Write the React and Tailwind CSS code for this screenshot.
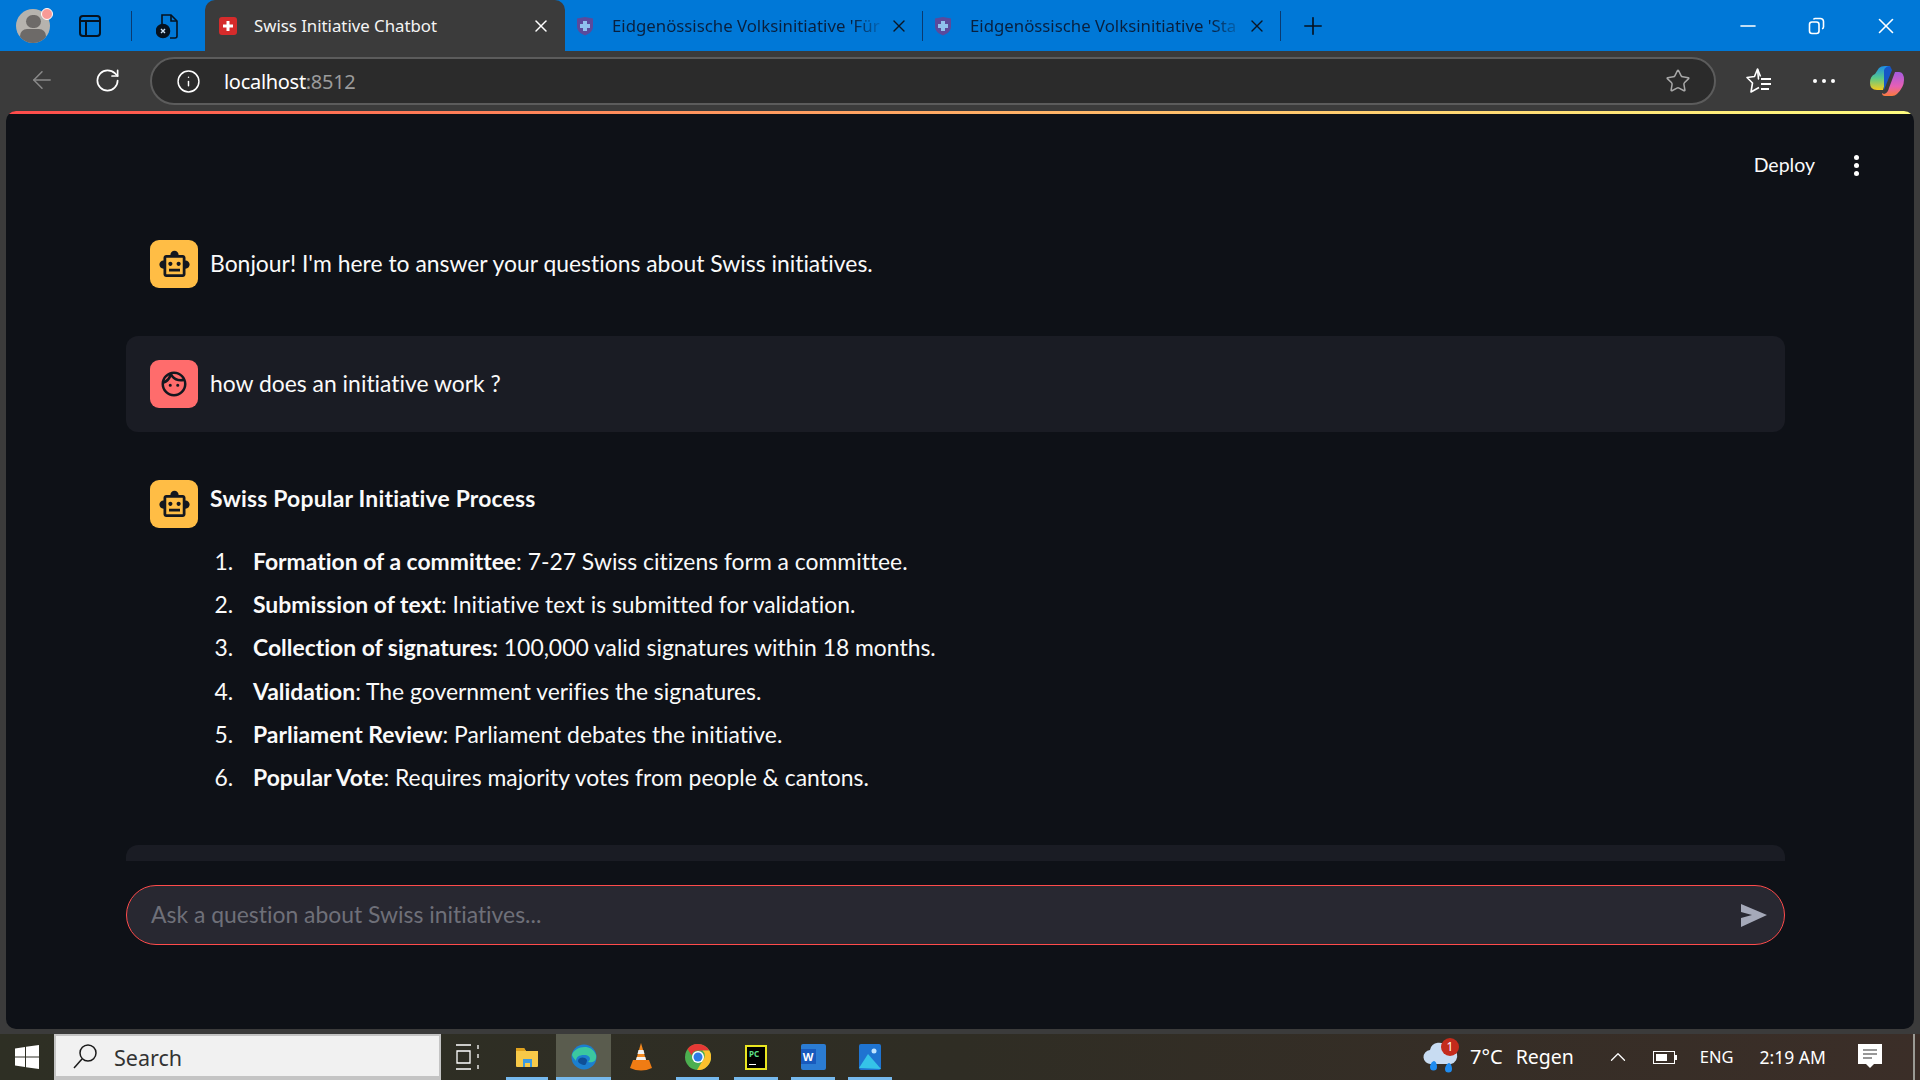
import { MdOutlineSmartToy, MdOutlineFace } from 'react-icons/md';
import { X, Plus, Minus, ArrowLeft, RotateCw, Info, Star, ChevronUp } from 'lucide-react';

const ui = "font-['Noto_Sans',sans-serif]";
const steps = [
  ['Formation of a committee', ': 7-27 Swiss citizens form a committee.'],
  ['Submission of text', ': Initiative text is submitted for validation.'],
  ['Collection of signatures:', ' 100,000 valid signatures within 18 months.'],
  ['Validation', ': The government verifies the signatures.'],
  ['Parliament Review', ': Parliament debates the initiative.'],
  ['Popular Vote', ': Requires majority votes from people & cantons.'],
];

const SwissIcon = () => (
  <svg width="18" height="18" viewBox="0 0 18 18" className="shrink-0">
    <rect width="18" height="18" rx="3" fill="#d52b2b" />
    <path d="M7.5 4h3v3.5H14v3h-3.5V14h-3v-3.5H4v-3h3.5z" fill="#fff" />
  </svg>
);

const ShieldIcon = () => (
  <svg width="18" height="20" viewBox="0 0 18 20" className="shrink-0">
    <path d="M1 2.5 9 1l8 1.5v8C17 15 13 18 9 19.500 5 18 1 15 1 10.500z" fill="#5a4a9c" />
    <path d="M7 5h4v3h3v4h-3v3H7v-3H4V8h3z" fill="#8fc1ee" />
  </svg>
);

const Robot = () => (
  <div className="w-12 h-12 rounded-[9px] bg-[#ffbd45] flex items-center justify-center shrink-0 text-[#14171f]">
    <MdOutlineSmartToy size={33} />
  </div>
);

const Tab = ({ title }) => (
  <div className="w-[357px] h-full flex items-center pl-[11px] shrink-0">
    <ShieldIcon />
    <span className="ml-[18px] w-[268px] whitespace-nowrap overflow-hidden text-[16.800px] bg-gradient-to-r from-[#08203f] from-90% to-[#08203f33] bg-clip-text text-transparent">{title}</span>
    <X size={20} strokeWidth={1.6} className="ml-[9px] text-[#0a1626]" />
  </div>
);

const Sep = () => <div className="w-px h-[30px] bg-[#0a3a70] shrink-0" />;

const Browser = () => (
  <div className={`${ui} shrink-0`}>
    <div className="h-[51px] bg-[#0078d7] flex items-center relative">
      <div className="ml-[16px] w-[34px] h-[34px] rounded-full bg-[#b6b3ae] overflow-hidden relative shrink-0 flex flex-col items-center">
        <div className="w-[15px] h-[15px] rounded-full bg-[#6d6a68] mt-[6px]" />
        <div className="w-[26px] h-[16px] rounded-full bg-[#6d6a68] mt-[1px]" />
      </div>
      <div className="absolute left-[41px] top-[8px] w-[12px] h-[12px] rounded-full bg-[#f79a96] border border-[#fff]" />
      <svg width="22" height="22" viewBox="0 0 22 22" className="ml-[29px] shrink-0" fill="none" stroke="#06121f" strokeWidth="2">
        <rect x="1" y="1" width="20" height="20" rx="3" />
        <path d="M1 6h20M7 6v15" />
      </svg>
      <div className="w-px h-[30px] bg-[#0a3a70] ml-[30px] shrink-0" />
      <svg width="22" height="26" viewBox="0 0 22 26" className="ml-[24px] shrink-0" fill="none" stroke="#06121f" strokeWidth="1.6">
        <path d="M6 12V2h9l6 6v15a2 2 0 0 1-2 2h-5" />
        <path d="M15 2v6h6" />
        <circle cx="7" cy="18" r="6.500" fill="#06121f" />
        <path d="m5 16 4 4m0-4-4 4" stroke="#cfe4f7" strokeWidth="1.400" />
      </svg>
      <div className="ml-[27px] w-[360px] h-full bg-[#3b3b3b] rounded-t-[10px] flex items-center pl-[14px] shrink-0">
        <SwissIcon />
        <span className="ml-[17px] text-[16.800px] text-[#f4f4f4] whitespace-nowrap">Swiss Initiative Chatbot</span>
        <X size={20} strokeWidth={1.8} className="ml-auto mr-[14px] text-white" />
      </div>
      <Tab title="Eidgenössische Volksinitiative 'Für" />
      <Sep />
      <Tab title="Eidgenössische Volksinitiative 'Sta" />
      <Sep />
      <Plus size={28} strokeWidth={1.4} className="ml-[18px] text-[#06121f]" />
      <Minus size={24} strokeWidth={1.6} className="ml-[409px] text-white" />
      <svg width="18" height="18" viewBox="0 0 18 18" className="ml-[48px]" fill="none" stroke="#fff" strokeWidth="1.6">
        <rect x="1.500" y="5" width="9.500" height="11.500" rx="2.500" />
        <path d="M5.500 2.500A1.500 1.500 0 0 1 7 1.500h5.500a3 3 0 0 1 3 3V10a2 2 0 0 1-1.500 1.800" />
      </svg>
      <X size={26} strokeWidth={1.5} className="ml-[47px] text-white" />
    </div>
    <div className="h-[60px] bg-[#3b3b3b] flex items-start">
      <ArrowLeft size={28} strokeWidth={1.3} className="ml-[28px] mt-[15px] text-[#8a8a8a]" />
      <RotateCw size={27} strokeWidth={1.5} className="ml-[38px] mt-[16px] text-white" />
      <div className="ml-[29px] mt-[6px] w-[1566px] h-[48px] rounded-full bg-[#2b2b2b] border-2 border-[#5c5c5c] flex items-center pl-[24px] pr-[23px]">
        <Info size={25} strokeWidth={1.4} className="text-white" />
        <span className="ml-[23px] pt-[1px] text-[20px] tracking-[-0.3px] text-white">localhost<span className="text-[#9b9b9b]">:8512</span></span>
        <Star size={26} strokeWidth={1.4} className="ml-auto text-[#a8a8a8]" />
      </div>
      <svg width="28" height="28" viewBox="0 0 28 28" className="ml-[30px] mt-[16px] shrink-0" fill="none" stroke="#fff" strokeWidth="1.600" strokeLinejoin="round">
        <path d="M13 12h-0.500L11.500 2 8.500 9.500 1 10.500 6.500 16 5 25l8-4.500" />
        <path d="M11.500 2l3 7.500" />
        <path d="M15 12h10M15 17h10M15 22h8" strokeWidth="1.800" />
      </svg>
      <div className="ml-[39px] mt-[28px] flex gap-[5px] shrink-0">
        <div className="w-[4px] h-[4px] rounded-full bg-white" />
        <div className="w-[4px] h-[4px] rounded-full bg-white" />
        <div className="w-[4px] h-[4px] rounded-full bg-white" />
      </div>
      <svg width="36" height="32" viewBox="0 0 36 32" className="ml-[34px] mt-[14px] shrink-0">
        <defs>
          <linearGradient id="cpA" x1="0" y1="0" x2="0" y2="1">
            <stop offset="0" stopColor="#1c8ce8" />
            <stop offset="0.5" stopColor="#58c98a" />
            <stop offset="1" stopColor="#f5cc1f" />
          </linearGradient>
          <linearGradient id="cpB" x1="0" y1="0" x2="0" y2="1">
            <stop offset="0" stopColor="#a45be0" />
            <stop offset="0.6" stopColor="#e65fb4" />
            <stop offset="1" stopColor="#fb7b3c" />
          </linearGradient>
        </defs>
        <path d="M10 3Q12 1 16 1h5l-7 24H8Q1 25 1 18 1 11 6 9z" fill="url(#cpA)" />
        <path d="M15 5q2-4 6-4l2 4-8 20z" fill="#1556c7" />
        <path d="M26 7h4q5 0 5 8 0 7-7 14-2 2-5 2h-7q-3 0-3-3l2 1q4-1 5-6z" fill="url(#cpB)" />
      </svg>
    </div>
  </div>
);

const Page = () => (
  <div className="mx-[6px] h-[918px] bg-[#0e1117] rounded-[10px] overflow-hidden flex flex-col font-['Lato',sans-serif] [font-variant-ligatures:none] text-[#fafafa]">
    <div className="h-[3px] bg-gradient-to-r from-[#ff4b4b] to-[#fffd80] shrink-0" />
    <div className="h-[102px] shrink-0 flex items-start justify-end pr-[55px] pt-[35px]">
      <span className="text-[19.500px] leading-[32px]">Deploy</span>
      <div className="ml-[39px] mt-[6px] flex flex-col gap-[3px]">
        <div className="w-[5px] h-[5px] rounded-full bg-white" />
        <div className="w-[5px] h-[5px] rounded-full bg-white" />
        <div className="w-[5px] h-[5px] rounded-full bg-white" />
      </div>
    </div>
    <div className="h-[645px] overflow-hidden mx-[120px] w-[1659px] text-[22.900px] flex flex-col gap-[24px]">
      <div className="p-[24px] flex items-center gap-[12px] h-[96px] shrink-0">
        <Robot />
        <p className="-mt-[1px]">Bonjour! I'm here to answer your questions about Swiss initiatives.</p>
      </div>
      <div className="p-[24px] flex items-center gap-[12px] h-[96px] bg-[#1a1c24] rounded-[12px] shrink-0">
        <div className="w-12 h-12 rounded-[9px] bg-[#ff6c6c] flex items-center justify-center shrink-0 text-[#14171f]">
          <MdOutlineFace size={30} />
        </div>
        <p className="-mt-[1px]">how does an initiative work ?</p>
      </div>
      <div className="p-[24px] flex items-start gap-[12px] shrink-0">
        <Robot />
        <div>
          <h3 className="font-bold leading-[36px] tracking-[0.2px]">Swiss Popular Initiative Process</h3>
          <ol className="list-decimal pl-[29px] mt-[27px] mb-[1px]">
            {steps.map(([head, rest]) => (
              <li key={head} className="pl-[14px] leading-[37px] mt-[6.200px]">
                <b className="font-bold">{head}</b>{rest}
              </li>
            ))}
          </ol>
        </div>
      </div>
      <div className="h-[40px] bg-[#1a1c24] rounded-t-[12px] shrink-0" />
    </div>
    <div className="mt-[24px] mx-[120px] w-[1659px] h-[60px] rounded-full bg-[#282831] border border-[#ff4b4b] flex items-center pl-[24px] pr-[16px] shrink-0">
      <span className="text-[22.900px] leading-[30px] mb-[2px] text-[#6f7079]">Ask a question about Swiss initiatives...</span>
      <svg width="28" height="24" viewBox="0 0 28 24" className="ml-auto">
        <path d="M1 1 27 12 1 24l0-9 11-3-11-3z" fill="#a5a9b9" />
      </svg>
    </div>
  </div>
);

const AppIcon = ({ active, children }) => (
  <div className={`w-[55px] h-full shrink-0 flex items-center justify-center relative ${active ? 'bg-[#5a5c4e]' : ''}`}>
    {children}
    <div className={`absolute bottom-0 h-[3px] bg-[#76b9ed] ${active ? 'left-0 right-0' : 'left-[6px] right-[6px]'}`} />
  </div>
);

const Taskbar = () => (
  <div className={`${ui} h-[46px] shrink-0 flex items-stretch bg-gradient-to-r from-[#2e2f24] via-[#2f2d24] to-[#3b2e28] text-white`}>
    <svg width="24" height="24" viewBox="0 0 24 24" className="ml-[15px] self-center shrink-0" fill="#fff">
      <path d="M0 3.400 10 2v9.500H0zM11 1.800 24 0v11.500H11zM0 12.500h10V22L0 20.600zM11 12.500h13V24l-13-1.800z" />
    </svg>
    <div className="ml-[15px] w-[387px] bg-[#f1f1f1] border-2 border-b-4 border-[#c4c4c4] flex items-center pl-[16px] shrink-0">
      <svg width="26" height="26" viewBox="0 0 26 26" fill="none" stroke="#1a1a1a" strokeWidth="1.500">
        <circle cx="16" cy="10" r="8" />
        <path d="M10 16 2 25" />
      </svg>
      <span className="ml-[16px] pt-[4px] text-[21.500px] text-[#333]">Search</span>
    </div>
    <svg width="24" height="26" viewBox="0 0 24 26" className="ml-[15px] self-center shrink-0" fill="none" stroke="#fff" strokeWidth="1.300">
      <path d="M0 1h15M0 25h15M1 7h13v12H1zM22 1v4M22 10v4M22 21v4" />
    </svg>
    <div className="ml-[26px] w-[42px] shrink-0 flex items-center justify-center relative">
      <svg width="24" height="20" viewBox="0 0 24 20">
        <path d="M1 1h8l2 3h12v15a1 1 0 0 1-1 1H2a1 1 0 0 1-1-1z" fill="#f7c948" />
        <path d="M1 1h8l2 3H1z" fill="#e0a21e" />
        <path d="M8 12h9v8h-2v-4h-5v4H8z" fill="#3d9be0" />
      </svg>
      <div className="absolute bottom-0 left-0 right-0 h-[3px] bg-[#76b9ed]" />
    </div>
    <div className="ml-[8px]">
      <AppIcon active>
        <svg width="26" height="26" viewBox="0 0 26 26">
          <circle cx="13" cy="13" r="12.500" fill="#1c7fcf" />
          <path d="M1 11C3 3 20-2 25 11c1 6-3 8-8 7 3-2 3-7-4-7-5 0-8 2-8 6-1-2-3-3-4-6z" fill="#3bc8a0" />
          <path d="M7 17c0-4 7-5 9-1 0 3-2 5-2 5-3 0-7-2-7-4z" fill="#0f4f96" />
        </svg>
      </AppIcon>
    </div>
    <div className="ml-[8px] w-[43px] shrink-0 flex items-center justify-center">
      <svg width="22" height="28" viewBox="0 0 22 28">
        <path d="M11 0 16 17H6z" fill="#f58a1f" />
        <path d="M8.500 7h5l1 4h-7zM6.800 14h8.500l.7 3H6z" fill="#f2f2f2" />
        <path d="M3 17h16l3 8q-11 5-22 0z" fill="#f07c14" />
      </svg>
    </div>
    <div className="ml-[14px] w-[43px] shrink-0 flex items-center justify-center relative">
      <svg width="26" height="26" viewBox="0 0 26 26">
        <circle cx="13" cy="13" r="13" fill="#4caf50" />
        <path d="M13 0a13 13 0 0 1 11.300 6.500H13a6.500 6.500 0 0 0-6.300 5L2.500 5A13 13 0 0 1 13 0z" fill="#e53935" />
        <path d="M24.300 6.500A13 13 0 0 1 12 26l6-10a6.500 6.500 0 0 0-.5-9.500z" fill="#fbc02d" />
        <circle cx="13" cy="13" r="6" fill="#fff" />
        <circle cx="13" cy="13" r="4.500" fill="#2c7be5" />
      </svg>
      <div className="absolute bottom-0 left-0 right-0 h-[3px] bg-[#76b9ed]" />
    </div>
    <div className="ml-[15px] w-[44px] shrink-0 flex items-center justify-center relative">
      <div className="w-[22px] h-[25px] bg-black border-2 border-[#e9e520] flex flex-col pl-[2px] pt-[2px] text-[8px] leading-[9px] font-bold text-[#5ee08a]">
        <span>PC</span>
        <div className="w-[7px] h-[1px] bg-white mt-[6px]" />
      </div>
      <div className="absolute bottom-0 left-0 right-0 h-[3px] bg-[#76b9ed]" />
    </div>
    <div className="ml-[13px] w-[44px] shrink-0 flex items-center justify-center relative">
      <div className="w-[25px] h-[26px] relative bg-[#2b7cd3] rounded-[2px]">
        <div className="absolute left-0 top-[5px] w-[15px] h-[15px] bg-[#185abd] text-white text-[11px] leading-[15px] text-center font-bold">W</div>
      </div>
      <div className="absolute bottom-0 left-0 right-0 h-[3px] bg-[#76b9ed]" />
    </div>
    <div className="ml-[13px] w-[44px] shrink-0 flex items-center justify-center relative">
      <svg width="22" height="26" viewBox="0 0 22 26">
        <rect width="22" height="26" rx="2" fill="#1f74d1" />
        <circle cx="15" cy="7" r="2.500" fill="#bfe3ff" />
        <path d="M0 24 9 10l13 15z" fill="#35c3e8" />
      </svg>
      <div className="absolute bottom-0 left-0 right-0 h-[3px] bg-[#76b9ed]" />
    </div>
    <div className="ml-[531px] w-[36px] self-center h-[36px] shrink-0 relative">
      <svg width="36" height="36" viewBox="0 0 36 36">
        <path d="M8 25a7 7 0 0 1-1-14 9 9 0 0 1 17-2 7 7 0 0 1 4 16z" fill="#c8dcf2" />
        <path d="M11 22c2 0 3 4 3 6a3.500 3.500 0 0 1-7 0c0-2 2-6 4-6zM26 24c2 0 3 4 3 6a3.500 3.500 0 0 1-7 0c0-2 2-6 4-6z" fill="#1f8cf0" />
      </svg>
      <div className="absolute right-0 top-[-1px] w-[18px] h-[18px] rounded-full bg-[#c42b1c] text-white text-[12px] leading-[18px] text-center">1</div>
    </div>
    <span className="ml-[11px] self-center text-[20px] whitespace-nowrap">7°C</span>
    <span className="ml-[13px] self-center text-[19.500px]">Regen</span>
    <ChevronUp size={26} strokeWidth={1.200} className="ml-[31px] self-center text-white" />
    <div className="ml-[22px] self-center w-[22px] h-[13px] border border-white flex items-center p-[2px] shrink-0">
      <div className="w-[11px] h-full bg-white" />
    </div>
    <div className="self-center w-[2px] h-[5px] bg-white" />
    <span className="ml-[23px] self-center text-[16.500px]">ENG</span>
    <span className="ml-[26px] self-center text-[17.500px] whitespace-nowrap">2:19 AM</span>
    <svg width="24" height="26" viewBox="0 0 24 26" className="ml-[32px] self-center shrink-0">
      <path d="M0 0h24v20h-8l-4 4-4-4H0z" fill="#fff" />
      <path d="M5 6h14M5 10h14M5 14h9" stroke="#333" strokeWidth="1.200" />
    </svg>
    <div className="ml-[31px] w-[2px] bg-[#9a9a94] shrink-0" />
  </div>
);

export default function App() {
  return (
    <div className="w-[1920px] h-[1080px] bg-[#3b3b3b] flex flex-col overflow-hidden">
      <Browser />
      <Page />
      <div className="h-[5px] shrink-0" />
      <Taskbar />
    </div>
  );
}
